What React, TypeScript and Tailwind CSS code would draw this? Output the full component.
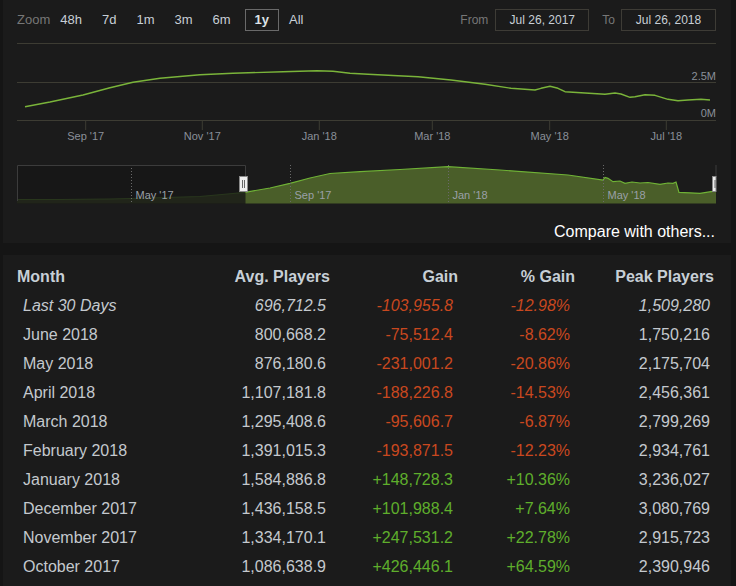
import React from "react";

const rows = [
  ["Last 30 Days", "696,712.5", "-103,955.8", "-12.98%", "1,509,280"],
  ["June 2018", "800,668.2", "-75,512.4", "-8.62%", "1,750,216"],
  ["May 2018", "876,180.6", "-231,001.2", "-20.86%", "2,175,704"],
  ["April 2018", "1,107,181.8", "-188,226.8", "-14.53%", "2,456,361"],
  ["March 2018", "1,295,408.6", "-95,606.7", "-6.87%", "2,799,269"],
  ["February 2018", "1,391,015.3", "-193,871.5", "-12.23%", "2,934,761"],
  ["January 2018", "1,584,886.8", "+148,728.3", "+10.36%", "3,236,027"],
  ["December 2017", "1,436,158.5", "+101,988.4", "+7.64%", "3,080,769"],
  ["November 2017", "1,334,170.1", "+247,531.2", "+22.78%", "2,915,723"],
  ["October 2017", "1,086,638.9", "+426,446.1", "+64.59%", "2,390,946"],
];

const linePts = [
  [25, 106.7], [50, 102], [83, 95], [110, 87.7], [133, 82.3], [160, 78.3], [200, 74.7],
  [233, 73.3], [283, 71.7], [317, 70.7], [333, 71.3], [350, 73.3], [368, 74.3], [418, 76.7],
  [451, 80], [485, 84.3], [511, 88.3], [535, 90], [541, 88.3], [550, 86.3], [558, 88.3],
  [565, 91.7], [585, 93], [605, 94.3], [615, 93], [621, 94], [630, 97.3], [635, 96.7],
  [645, 94.7], [655, 95.3], [668, 99.3], [678, 100.7], [688, 100], [701, 99.3], [710, 100],
];

const navPts = [
  [17, 199.5], [60, 199.5], [110, 199], [150, 198], [200, 196.5], [233, 193.5], [245, 192.3],
  [270, 188], [290, 183.3], [310, 178], [330, 173.5], [360, 171.7], [400, 169.5], [448, 166.7],
  [500, 170], [568, 175], [603, 180], [605, 177.5], [608, 178.3], [613, 181.7], [620, 181],
  [625, 183.3], [632, 182], [640, 183], [648, 182.5], [660, 184.3], [668, 183], [673, 183.3],
  [676, 182], [679, 192.3], [690, 192.8], [700, 193.3], [711, 191.7], [716, 191],
];

const toPath = (pts: number[][]) => pts.map((p, i) => `${i ? "L" : "M"}${p[0]},${p[1]}`).join(" ");

const zooms = ["48h", "7d", "1m", "3m", "6m"];

function Chart() {
  const xTicks: [number, string][] = [
    [85.7, "Sep '17"], [202.3, "Nov '17"], [319.3, "Jan '18"],
    [432.3, "Mar '18"], [549.7, "May '18"], [666.3, "Jul '18"],
  ];
  const navLines: [number, string][] = [
    [131.5, "May '17"], [290.5, "Sep '17"], [448.5, "Jan '18"], [603.5, "May '18"],
  ];
  return (
    <svg width={728} height={175} viewBox="3 40 728 175" className="block">
      {[43.5, 82.5, 120.5].map((y) => (
        <line key={y} x1={17} x2={716} y1={y} y2={y} stroke="#3d3c33" strokeWidth={1} />
      ))}
      {xTicks.map(([x, t]) => (
        <g key={t}>
          <line x1={x} x2={x} y1={120} y2={130} stroke="#3d3c33" />
          <text x={x} y={140} fontSize={11} fill="#8a9099" textAnchor="middle">{t}</text>
        </g>
      ))}
      <text x={716} y={80} fontSize={11} fill="#8a9099" textAnchor="end">2.5M</text>
      <text x={716} y={117} fontSize={11} fill="#8a9099" textAnchor="end">0M</text>
      <path d={toPath(linePts)} fill="none" stroke="#7ab43a" strokeWidth={1.4} strokeLinejoin="round" />

      {/* navigator */}
      <path d={`${toPath(navPts)} L716,203.5 L17,203.5 Z`} fill="#4a5e29" />
      <path d={toPath(navPts)} fill="none" stroke="#6fb236" strokeWidth={1.2} />
      <rect x={17} y={165} width={228.5} height={39} fill="#171717" fillOpacity={0.8} />
      {navLines.map(([x, t]) => (
        <g key={t}>
          <line x1={x} x2={x} y1={165} y2={203} stroke="#6a6a6a" strokeDasharray="1 2" />
          <text x={x + 4} y={199} fontSize={11} fill="#9aa0a8">{t}</text>
        </g>
      ))}
      <path d="M17.5,201 V165.5 H245.5 V176" fill="none" stroke="#3c3c3c" />
      <line x1={716} x2={716} y1={165} y2={177} stroke="#3c3c3c" />
      <rect x={239.5} y={176.5} width={8} height={15} fill="#eeeeee" stroke="#8a8a8a" />
      <line x1={242.5} x2={242.5} y1={180} y2={188} stroke="#666" />
      <line x1={244.5} x2={244.5} y1={180} y2={188} stroke="#666" />
      <rect x={712.5} y={176.5} width={3.5} height={15} fill="#eeeeee" stroke="#8a8a8a" />
      <line x1={715} x2={715} y1={180} y2={188} stroke="#666" />
    </svg>
  );
}

export default function App() {
  return (
    <div className="w-[736px] h-[586px] bg-[#151515] pl-[3px] pr-[5px] flex flex-col font-['Liberation_Sans',Arial,sans-serif] overflow-hidden">
      <div className="h-[243px] bg-[#1b1b1b] flex flex-col">
        <div className="h-[40px] flex items-center justify-between pl-[14px] pr-[15px]">
          <div className="flex items-center text-[13px] text-[#c8cfd6]">
            <span className="text-[#777]">Zoom</span>
            {zooms.map((z) => (
              <span key={z} className="px-[10px] leading-[22px]">{z}</span>
            ))}
            <span className="ml-[4px] px-[9px] h-[22px] leading-[20px] border border-[#6a6a6a] font-bold text-[#dde2e6]">1y</span>
            <span className="px-[10px] leading-[22px]">All</span>
          </div>
          <div className="flex items-center text-[12px]">
            <span className="text-[#777] mr-[7px]">From</span>
            <div className="w-[94px] h-[22px] border border-[#3e3c36] flex items-center justify-center text-[#c8cfd6]">Jul 26, 2017</div>
            <span className="text-[#777] ml-[13px] mr-[6px]">To</span>
            <div className="w-[95px] h-[22px] border border-[#3e3c36] flex items-center justify-center text-[#c8cfd6]">Jul 26, 2018</div>
          </div>
        </div>
        <Chart />
        <div className="flex-1 flex items-end justify-end pr-[16px] pb-[2px]">
          <span className="text-[16px] leading-[18px] text-white">Compare with others...</span>
        </div>
      </div>
      <div className="mt-[12px] flex-1 bg-[#1b1b1b] pt-[7px] pl-[14px]">
        <div className="grid grid-cols-[183px_130px_128px_117px_139px] text-[16px]">
          <div className="h-[29px] flex items-center font-bold text-[#c7cfd6]">Month</div>
          <div className="h-[29px] flex items-center justify-end font-bold text-[#c7cfd6]">Avg. Players</div>
          <div className="h-[29px] flex items-center justify-end font-bold text-[#c7cfd6]">Gain</div>
          <div className="h-[29px] flex items-center justify-end font-bold text-[#c7cfd6]">% Gain</div>
          <div className="h-[29px] flex items-center justify-end font-bold text-[#c7cfd6]">Peak Players</div>
          {rows.map((r, i) => {
            const neg = r[2].startsWith("-");
            const tone = neg ? "text-[#c9481f]" : "text-[#5fae2c]";
            const it = i === 0 ? "italic" : "";
            return (
              <React.Fragment key={r[0]}>
                <div className={`h-[29px] flex items-center pl-[6px] text-[#c4c9ce] ${it}`}>{r[0]}</div>
                <div className={`h-[29px] flex items-center justify-end pr-[4px] text-[#c4c9ce] ${it}`}>{r[1]}</div>
                <div className={`h-[29px] flex items-center justify-end pr-[5px] ${tone} ${it}`}>{r[2]}</div>
                <div className={`h-[29px] flex items-center justify-end pr-[5px] ${tone} ${it}`}>{r[3]}</div>
                <div className={`h-[29px] flex items-center justify-end pr-[4px] text-[#c4c9ce] ${it}`}>{r[4]}</div>
              </React.Fragment>
            );
          })}
        </div>
      </div>
    </div>
  );
}
